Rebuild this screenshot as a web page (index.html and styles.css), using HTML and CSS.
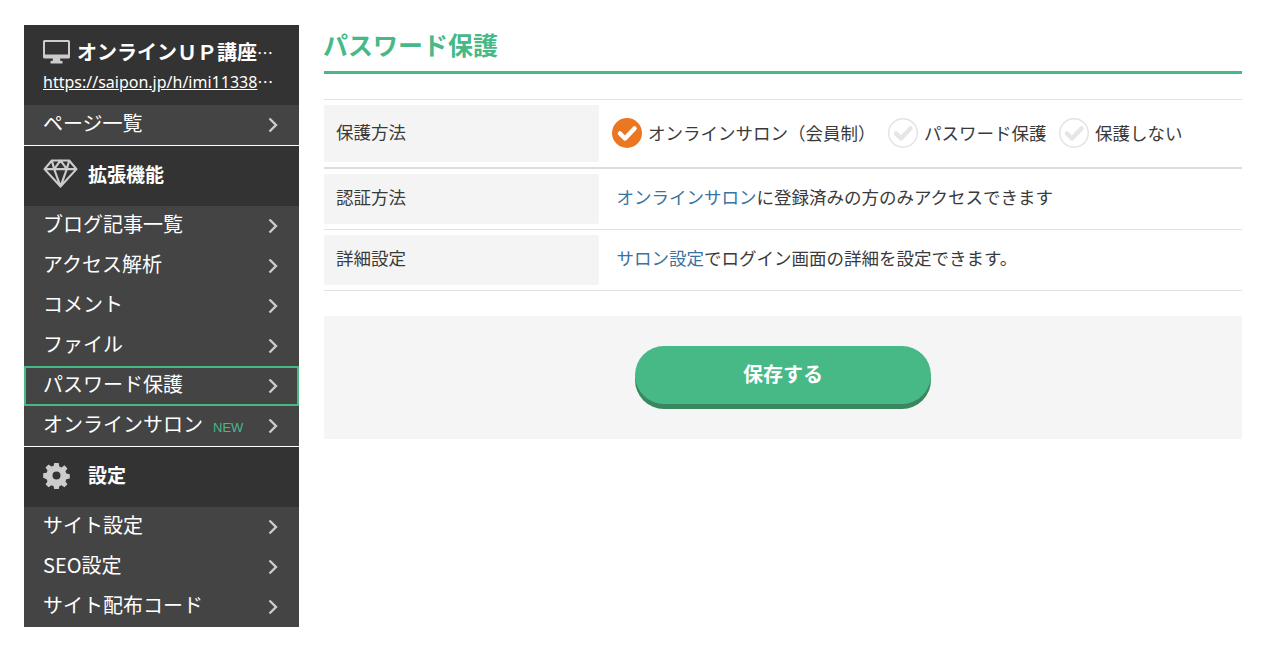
FILE: index.html
```html
<!DOCTYPE html>
<html lang="ja">
<head>
<meta charset="utf-8">
<title>パスワード保護</title>
<link rel="stylesheet" href="styles.css">
</head>
<body>
<div class="page">
  <aside class="side">
    <div class="site">
      <div class="site-name">
        <svg class="mon" viewBox="0 0 27 24"><path fill="#ccc" fill-rule="evenodd" d="M1.500 0h24A1.500 1.500 0 0 1 27 1.500V17a1.500 1.500 0 0 1-1.500 1.500H1.500A1.500 1.500 0 0 1 0 17V1.500A1.500 1.500 0 0 1 1.500 0zM2 2v12.500h23V2zM10 18.500h7l.5 2.500h2v2.500h-12V21h2z"/></svg>
        <span class="ell">オンラインＵＰ講座</span><span class="dots">…</span>
      </div>
      <div class="site-url"><a class="url" href="#">https://saipon.jp/h/imi11338</a><span class="dots-url">…</span></div>
    </div>
    <a class="item" href="#">ページ一覧<svg class="chev" viewBox="0 0 10 16"><path d="M1.500 1.500 8 8l-6.500 6.500"/></svg></a>
    <div class="head">
      <svg class="gem" viewBox="0 0 36 30"><path fill="none" stroke="#ccc" stroke-width="2.200" stroke-linejoin="round" d="M9 1.500h18l7.500 9L18 28.500 1.500 10.500zM1.500 10.500h33M11.500 10.500 18 28.500l6.500-18M9 1.500l2.500 9L18 1.500l6.500 9L27 1.500"/></svg>
      <span>拡張機能</span>
    </div>
    <a class="item" href="#">ブログ記事一覧<svg class="chev" viewBox="0 0 10 16"><path d="M1.500 1.500 8 8l-6.500 6.500"/></svg></a>
    <a class="item" href="#">アクセス解析<svg class="chev" viewBox="0 0 10 16"><path d="M1.500 1.500 8 8l-6.500 6.500"/></svg></a>
    <a class="item" href="#">コメント<svg class="chev" viewBox="0 0 10 16"><path d="M1.500 1.500 8 8l-6.500 6.500"/></svg></a>
    <a class="item" href="#">ファイル<svg class="chev" viewBox="0 0 10 16"><path d="M1.500 1.500 8 8l-6.500 6.500"/></svg></a>
    <a class="item current" href="#">パスワード保護<svg class="chev" viewBox="0 0 10 16"><path d="M1.500 1.500 8 8l-6.500 6.500"/></svg></a>
    <a class="item" href="#">オンラインサロン<span class="new">NEW</span><svg class="chev" viewBox="0 0 10 16"><path d="M1.500 1.500 8 8l-6.500 6.500"/></svg></a>
    <div class="head">
      <svg class="gear" viewBox="0 0 28 28"><path fill="#ccc" fill-rule="evenodd" d="M11.500 0h5l.7 3.900 2.500 1 3.200-2.300 3.500 3.500-2.300 3.200 1 2.500 3.900.7v5l-3.900.7-1 2.500 2.300 3.200-3.500 3.500-3.200-2.300-2.500 1-.7 3.900h-5l-.7-3.900-2.500-1-3.200 2.300-3.500-3.500 2.300-3.200-1-2.500L-1 16.500v-5l3.900-.7 1-2.500-2.300-3.200 3.500-3.500 3.200 2.300 2.500-1zM14 9.500a4.500 4.500 0 1 0 0 9 4.500 4.500 0 0 0 0-9z" transform="translate(1.100 1.100) scale(.92)"/></svg>
      <span>設定</span>
    </div>
    <a class="item" href="#">サイト設定<svg class="chev" viewBox="0 0 10 16"><path d="M1.500 1.500 8 8l-6.500 6.500"/></svg></a>
    <a class="item" href="#">SEO設定<svg class="chev" viewBox="0 0 10 16"><path d="M1.500 1.500 8 8l-6.500 6.500"/></svg></a>
    <a class="item" href="#">サイト配布コード<svg class="chev" viewBox="0 0 10 16"><path d="M1.500 1.500 8 8l-6.500 6.500"/></svg></a>
  </aside>
  <main class="main">
    <h1 class="title">パスワード保護</h1>
    <div class="table">
      <div class="row row-first">
        <div class="label label-tall">保護方法</div>
        <div class="val options">
          <span class="opt"><svg class="check" viewBox="0 0 30 30"><circle cx="15" cy="15" r="15" fill="#ec7723"/><path fill="none" stroke="#fff" stroke-width="4.500" stroke-linecap="round" stroke-linejoin="round" d="M8 15.500l5 5 9.500-10"/></svg>オンラインサロン（会員制）</span>
          <span class="opt"><svg class="check" viewBox="0 0 30 30"><circle cx="15" cy="15" r="14.300" fill="#fff" stroke="#e2e2e2" stroke-width="1.400"/><path fill="none" stroke="#e6e6e6" stroke-width="4.500" stroke-linecap="round" stroke-linejoin="round" d="M8 15.500l5 5 9.500-10"/></svg>パスワード保護</span>
          <span class="opt"><svg class="check" viewBox="0 0 30 30"><circle cx="15" cy="15" r="14.300" fill="#fff" stroke="#e2e2e2" stroke-width="1.400"/><path fill="none" stroke="#e6e6e6" stroke-width="4.500" stroke-linecap="round" stroke-linejoin="round" d="M8 15.500l5 5 9.500-10"/></svg>保護しない</span>
        </div>
      </div>
      <div class="row">
        <div class="label">認証方法</div>
        <div class="val"><a class="link" href="#">オンラインサロン</a>に登録済みの方のみアクセスできます</div>
      </div>
      <div class="row">
        <div class="label">詳細設定</div>
        <div class="val"><a class="link" href="#">サロン設定</a>でログイン画面の詳細を設定できます。</div>
      </div>
    </div>
    <div class="save">
      <button class="btn" type="button">保存する</button>
    </div>
  </main>
</div>
</body>
</html>
```
FILE: styles.css
```css
* { box-sizing: border-box; }
html, body { margin: 0; padding: 0; background: #fff; }
body {
  font-family: "Noto Sans CJK JP", "Noto Sans", sans-serif;
  color: #3a3a3a;
}
a { text-decoration: none; }
.page {
  display: flex;
  align-items: flex-start;
  gap: 25px;
  padding: 25px 31px 0 24px;
}
.side {
  flex: 0 0 275px;
  width: 275px;
  background: #444;
  color: #fff;
}
.site {
  height: 80px;
  background: #333;
  padding: 10px 18px 0 20px;
}
.site-name {
  display: flex;
  align-items: center;
  height: 34px;
  font-size: 20px;
  font-weight: 700;
  line-height: 34px;
  white-space: nowrap;
}
.mon { width: 27px; height: 24px; margin-right: 7px; flex: none; margin-left: -1px; }
.dots { font-weight: 400; font-size: 16px; letter-spacing: 0; }
.site-url {
  font-family: "Noto Sans", "Noto Sans CJK JP", sans-serif;
  font-size: 16px;
  line-height: 24px;
  white-space: nowrap;
  margin-left: -1px;
}
.url { color: #fff; text-decoration: underline; }
.dots-url { font-family: "Noto Sans CJK JP", sans-serif; font-size: 16px; }
.item {
  display: flex;
  align-items: center;
  height: 40px;
  padding: 0 21px 4px 19px;
  font-size: 20px;
  line-height: 36px;
  color: #fff;
  white-space: nowrap;
}
.item.current { border: 2px solid #46b987; padding: 0 19px 4px 17px; }
.chev {
  width: 10px;
  height: 16px;
  margin-left: auto;
  margin-top: 4px;
  flex: none;
  fill: none;
  stroke: #ccc;
  stroke-width: 2.400;
}
.new {
  font-family: "Liberation Sans", sans-serif;
  font-size: 13px;
  color: #46b987;
  margin-left: 10px;
  margin-top: 7px;
}
.head {
  display: flex;
  align-items: center;
  height: 61px;
  padding: 0 0 5px 19px;
  background: #333;
  border-top: 1px solid #fff;
  font-size: 19px;
  font-weight: 700;
}
.gem { width: 35px; height: 29px; margin-right: 10px; flex: none; }
.gear { width: 27px; height: 27px; margin-right: 18px; flex: none; margin-top: 2px; }
.main { flex: 1 1 auto; min-width: 0; }
.title {
  margin: 0 0 0 0;
  height: 49px;
  padding-left: 0;
  border-bottom: 3px solid #46b987;
  color: #46b987;
  font-size: 25px;
  font-weight: 700;
  line-height: 38px;
  text-indent: -1px;
}
.table {
  margin-top: 25px;
  border-top: 1px solid #e2e2e2;
}
.row {
  display: flex;
  padding: 5px 0;
  border-bottom: 1px solid #e2e2e2;
}
.row-first { border-bottom: 2px solid #ddd; }
.label {
  flex: 0 0 275px;
  height: 50px;
  padding: 0 12px;
  background: #f4f4f4;
  font-size: 17.500px;
  line-height: 46px;
  border-radius: 2px;
}
.label-tall { height: 57px; line-height: 54px; }
.val {
  flex: 1 1 auto;
  padding-left: 17.500px;
  font-size: 17.500px;
  line-height: 45px;
  white-space: nowrap;
}
.options {
  display: flex;
  align-items: center;
  padding: 0 0 0 13px;
  gap: 12.500px;
}
.opt { display: flex; align-items: center; margin-top: -3px; }
.check { width: 30px; height: 30px; margin-right: 6px; margin-top: 2px; flex: none; }
.link { color: #39739f; }
.save {
  margin-top: 25px;
  height: 123px;
  background: #f5f5f5;
  padding-top: 30px;
  display: flex;
  justify-content: center;
  align-items: flex-start;
}
.btn {
  width: 296px;
  height: 58px;
  border: 0;
  border-radius: 29px;
  background: #46b987;
  box-shadow: 0 5px 0 #38875f;
  color: #fff;
  font: 700 20px/54px "Noto Sans CJK JP", sans-serif;
  padding: 0 0 2px;
}
```
